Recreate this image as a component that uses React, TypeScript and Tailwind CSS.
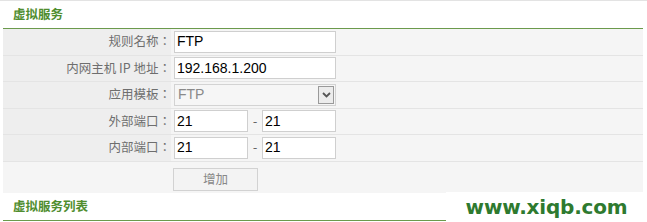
const labelFont = { fontFamily: '"Noto Sans CJK TC", "Noto Sans CJK SC", sans-serif' }

function Row({ label, children }: { label: string; children: React.ReactNode }) {
    return (
        <div className="flex h-[26.5px] border-b border-[#e4e4e4]">
            <div
                className="w-[168px] shrink-0 bg-[#eeeeee] flex items-center justify-end text-[12.5px] text-[#6e6e6e]"
                style={labelFont}
            >
                {label}：
            </div>
            <div className="flex-1 bg-[#f5f5f5] flex items-center pl-[3px]">{children}</div>
        </div>
    )
}

function TextBox({ value, width }: { value: string; width: number }) {
    return (
        <div
            className="h-[22px] bg-white border border-[#cfcfcf] flex items-center pl-[2px] text-[14px] text-black font-['Liberation_Sans',sans-serif]"
            style={{ width }}
        >
            {value}
        </div>
    )
}

function Section({ title }: { title: string }) {
    return (
        <div className="h-[28px] flex items-center pl-[10px] border-b border-[#6b9a4c]">
            <span className="text-[12.5px] font-bold text-[#4f8d2e]" style={{ fontFamily: '"Noto Sans CJK SC", sans-serif' }}>
                {title}
            </span>
        </div>
    )
}

export default function App() {
    return (
        <div className="relative w-[647px] h-[222px] bg-white overflow-hidden">
            <div className="h-[1px] bg-[#e3e3e3]" />
            <div className="px-[3px] pr-[4px]">
                <Section title="虚拟服务" />
                <Row label="规则名称">
                    <TextBox value="FTP" width={162} />
                </Row>
                <Row label="内网主机 IP 地址">
                    <TextBox value="192.168.1.200" width={162} />
                </Row>
                <Row label="应用模板">
                    <div className="w-[162px] h-[22px] bg-[#f6f6f6] border border-[#d3d3d3] flex items-center justify-between pl-[3px] pr-[1px]">
                        <span className="text-[14px] text-[#8a8a8a] font-['Liberation_Sans',sans-serif]">FTP</span>
                        <div className="w-[16px] h-[18px] bg-[#ececec] border border-[#9a9a9a] flex items-center justify-center">
                            <svg width="9" height="6" viewBox="0 0 9 6">
                                <path d="M1 1 L4.5 4.5 L8 1" fill="none" stroke="#555" strokeWidth="1.8" />
                            </svg>
                        </div>
                    </div>
                </Row>
                <Row label="外部端口">
                    <TextBox value="21" width={74} />
                    <span className="w-[14px] text-center text-[13px] text-[#666]">-</span>
                    <TextBox value="21" width={74} />
                </Row>
                <Row label="内部端口">
                    <TextBox value="21" width={74} />
                    <span className="w-[14px] text-center text-[13px] text-[#666]">-</span>
                    <TextBox value="21" width={74} />
                </Row>
                <div className="h-[31px] bg-[#f5f5f5] flex items-end pb-[2px] pl-[170px]">
                    <div
                        className="w-[85px] h-[23px] bg-[#f3f3f3] border border-[#d2d2d2] flex items-center justify-center text-[12.5px] text-[#888]"
                        style={labelFont}
                    >
                        增加
                    </div>
                </div>
                <Section title="虚拟服务列表" />
            </div>
            <div className="absolute left-[446px] top-[192px] w-[201px] h-[30px] bg-white flex items-center justify-center">
                <span className="text-[20px] font-bold text-[#2e7a2f] font-['DejaVu_Sans',sans-serif] tracking-[-0.2px]">
                    www.xiqb.com
                </span>
            </div>
        </div>
    )
}
